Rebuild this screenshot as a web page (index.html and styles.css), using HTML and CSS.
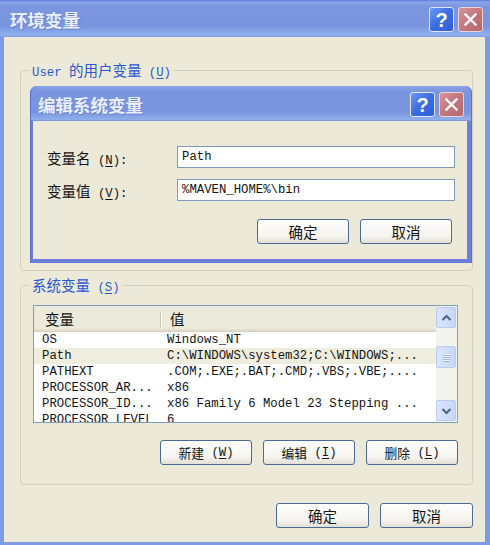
FILE: index.html
```html
<!DOCTYPE html>
<html lang="zh-CN">
<head>
<meta charset="utf-8">
<title>环境变量</title>
<link rel="stylesheet" href="styles.css">
</head>
<body>
<div class="win">
  <div class="titlebar">
    <span class="title zh">环境变量</span>
    <div class="tbtns">
      <span class="tb help">?</span>
      <span class="tb close"><svg width="15" height="15" viewBox="0 0 15 15"><path d="M2.5 2.5 L12.5 12.5 M12.5 2.5 L2.5 12.5" stroke="#fff" stroke-width="2.4" stroke-linecap="square"/></svg></span>
    </div>
  </div>
  <div class="client">
    <div class="group g-user">
      <div class="glabel">User <span class="zh">的用户变量</span> (<u>U</u>)</div>
    </div>
    <div class="group g-sys">
      <div class="glabel"><span class="zh">系统变量</span> (<u>S</u>)</div>
      <div class="listbox">
        <div class="lmain">
          <div class="lhead">
            <div class="hc h1 zh">变量</div>
            <div class="hdiv"></div>
            <div class="hc h2 zh">值</div>
          </div>
          <div class="row"><span class="c1">OS</span><span class="c2">Windows_NT</span></div>
          <div class="row sel"><span class="c1">Path</span><span class="c2">C:\WINDOWS\system32;C:\WINDOWS;...</span></div>
          <div class="row"><span class="c1">PATHEXT</span><span class="c2">.COM;.EXE;.BAT;.CMD;.VBS;.VBE;....</span></div>
          <div class="row"><span class="c1">PROCESSOR_AR...</span><span class="c2">x86</span></div>
          <div class="row"><span class="c1">PROCESSOR_ID...</span><span class="c2">x86 Family 6 Model 23 Stepping ...</span></div>
          <div class="row"><span class="c1">PROCESSOR_LEVEL</span><span class="c2">6</span></div>
        </div>
        <div class="sb">
          <div class="sbtn"><svg width="11" height="8" viewBox="0 0 11 8"><path d="M1.5 6 L5.5 2 L9.5 6" fill="none" stroke="#4d6185" stroke-width="2"/></svg></div>
          <div class="thumb"><span></span><span></span><span></span><span></span></div>
          <div class="sbspace"></div>
          <div class="sbtn"><svg width="11" height="8" viewBox="0 0 11 8"><path d="M1.5 2 L5.5 6 L9.5 2" fill="none" stroke="#4d6185" stroke-width="2"/></svg></div>
        </div>
      </div>
      <div class="btnrow">
        <button class="btn"><span class="zh sm">新建</span> (<u>W</u>)</button>
        <button class="btn"><span class="zh sm">编辑</span> (<u>I</u>)</button>
        <button class="btn"><span class="zh sm">删除</span> (<u>L</u>)</button>
      </div>
    </div>
    <div class="footer">
      <button class="btn wide"><span class="zh">确定</span></button>
      <button class="btn wide"><span class="zh">取消</span></button>
    </div>
  </div>

  <div class="dialog">
    <div class="dtitle">
      <span class="title zh">编辑系统变量</span>
      <div class="tbtns">
        <span class="tb help">?</span>
        <span class="tb close"><svg width="15" height="15" viewBox="0 0 15 15"><path d="M2.5 2.5 L12.5 12.5 M12.5 2.5 L2.5 12.5" stroke="#fff" stroke-width="2.4" stroke-linecap="square"/></svg></span>
      </div>
    </div>
    <div class="dbody">
      <div class="frow">
        <label class="flabel"><span class="zh">变量名</span> (<u>N</u>):</label>
        <div class="input">Path</div>
      </div>
      <div class="frow">
        <label class="flabel"><span class="zh">变量值</span> (<u>V</u>):</label>
        <div class="input">%MAVEN_HOME%\bin</div>
      </div>
      <div class="dbtns">
        <button class="btn"><span class="zh">确定</span></button>
        <button class="btn"><span class="zh">取消</span></button>
      </div>
    </div>
  </div>
</div>
</body>
</html>
```

FILE: styles.css
```css
* { box-sizing: border-box; }
html, body { margin: 0; padding: 0; }
body {
  width: 490px;
  height: 545px;
  overflow: hidden;
  background: #7d9ae3;
  font-family: "Liberation Mono", "Noto Sans CJK SC", monospace;
  font-size: 12.3px;
  color: #141414;
}
u { text-decoration: underline; text-underline-offset: 2px; }
.zh {
  font-family: "Noto Sans CJK SC", sans-serif;
  font-size: 14.5px;
}
.zh.sm { font-size: 12.8px; }

.win {
  position: relative;
  width: 490px;
  height: 545px;
  display: flex;
  flex-direction: column;
  background: linear-gradient(to bottom, #5b7bdc 0, #8aa3e8 2px, #7b96df 7px, #7a95df 26px, #8fb0ec 35px, #7d9ae3 37px, #7d9ae3 100%);
}

.titlebar {
  height: 37px;
  flex: none;
  display: flex;
  align-items: flex-start;
  justify-content: space-between;
  padding: 7px 7px 0 10px;
}
.title {
  font-size: 17.5px;
  font-weight: bold;
  color: #eaeefb;
  line-height: 25px;
  text-shadow: 1px 1px 0 #6a83cf;
  letter-spacing: 0;
}
.tbtns { display: flex; gap: 4px; }
.tb {
  width: 25px;
  height: 25px;
  border-radius: 3px;
  border: 1px solid #dfe6fa;
  display: flex;
  align-items: center;
  justify-content: center;
}
.help {
  background: linear-gradient(135deg, #6b97f2 0%, #3b6ce0 50%, #2f5fd8 100%);
  color: #fff;
  font-family: "Liberation Sans", sans-serif;
  font-weight: bold;
  font-size: 20px;
  line-height: 1;
}
.close {
  background: linear-gradient(135deg, #d69499 0%, #c3767b 50%, #b4676d 100%);
  border-color: #ecd3d5;
}

.client {
  flex: 1;
  margin: 0 5px 3px 4px;
  background: #ece9d8;
  display: flex;
  flex-direction: column;
}

.group {
  border: 1px solid #d3d0be;
  border-radius: 4px;
  margin: 0 12px 0 16px;
  display: flex;
  flex-direction: column;
}
.g-user { margin-top: 33px; height: 201px; }
.g-sys { margin-top: 14px; height: 200px; }
.glabel {
  align-self: flex-start;
  margin: -10px 0 0 9px;
  padding: 0 2px;
  height: 18px;
  line-height: 18px;
  background: #ece9d8;
  color: #2857d2;
  white-space: nowrap;
}
.glabel .zh { font-size: 14.5px; }

.listbox {
  margin: 11px 14px 0 12px;
  height: 118px;
  border: 1px solid #7f9db9;
  background: #fff;
  display: flex;
}
.lmain {
  flex: 1;
  overflow: hidden;
  display: flex;
  flex-direction: column;
}
.lhead {
  height: 26px;
  flex: none;
  display: flex;
  align-items: center;
  background: #ebeadb;
  border-bottom: 1px solid #d6d2c2;
  box-shadow: inset 0 -2px 0 #e2dfcf;
}
.hc { line-height: 24px; }
.h1 { width: 126px; padding-left: 11px; }
.hdiv {
  width: 2px;
  height: 16px;
  border-left: 1px solid #c7c5b2;
  border-right: 1px solid #fff;
}
.h2 { padding-left: 8px; }
.row {
  height: 16px;
  line-height: 16px;
  display: flex;
  flex: none;
  white-space: nowrap;
}
.row.sel { background: #efedde; }
.c1 { width: 126px; padding-left: 8px; flex: none; }
.c2 { padding-left: 7px; }

.sb {
  width: 21px;
  flex: none;
  background: #f4f4ef;
  padding: 1px 0;
  display: flex;
  flex-direction: column;
}
.sbtn, .thumb {
  width: 20px;
  height: 21px;
  border: 1px solid #b9cbf3;
  border-radius: 2px;
  background: linear-gradient(to right, #dbe5fd, #c6d6fa);
  display: flex;
  align-items: center;
  justify-content: center;
}
.thumb {
  margin-top: 18px;
  height: 22px;
  flex-direction: column;
  gap: 1px;
}
.thumb span {
  width: 7px;
  height: 1px;
  background: #eef3ff;
  box-shadow: 0 1px 0 #9fb5e6;
}
.sbspace { flex: 1; }

.btnrow {
  margin-top: 17px;
  padding-right: 14px;
  display: flex;
  justify-content: flex-end;
  gap: 11px;
}
.btn {
  font: inherit;
  color: #141414;
  width: 92px;
  height: 25px;
  padding: 0;
  border: 1px solid #4a6994;
  border-radius: 3px;
  background: linear-gradient(to bottom, #fefefd 0%, #f5f4ef 70%, #e2dfd4 100%);
  display: flex;
  align-items: center;
  justify-content: center;
  white-space: pre;
}
.btn .zh { line-height: 20px; }
.footer {
  margin-top: 18px;
  padding-right: 12px;
  display: flex;
  justify-content: flex-end;
  gap: 11px;
}
.btn.wide { width: 93px; }

.dialog {
  position: absolute;
  left: 30px;
  top: 86px;
  width: 442px;
  height: 177px;
  border-radius: 7px 7px 0 0;
  background: linear-gradient(to bottom, #8aa3e8 0, #7a95df 6px, #7a95df 26px, #8fb0ec 34px, #6b7fd9 35px, #6b7fd9 100%);
  padding: 0 5px 4px 3px;
  display: flex;
  flex-direction: column;
  box-shadow: inset 1px 0 0 #5a70d2, inset -1px 0 0 #5a70d2;
}
.dtitle {
  height: 35px;
  flex: none;
  display: flex;
  align-items: flex-start;
  justify-content: space-between;
  padding: 6px 3px 0 5px;
}
.dbody {
  flex: 1;
  background: #ece9d8;
  padding: 25px 12px 0 14px;
  display: flex;
  flex-direction: column;
  gap: 11px;
}
.frow {
  display: flex;
  align-items: center;
}
.flabel { width: 130px; white-space: pre; }
.input {
  width: 278px;
  height: 22px;
  border: 1px solid #7f9db9;
  background: #fff;
  line-height: 20px;
  padding-left: 4px;
  white-space: nowrap;
}
.dbtns {
  margin-top: 7px;
  padding-right: 3px;
  display: flex;
  justify-content: flex-end;
  gap: 11px;
}
```
